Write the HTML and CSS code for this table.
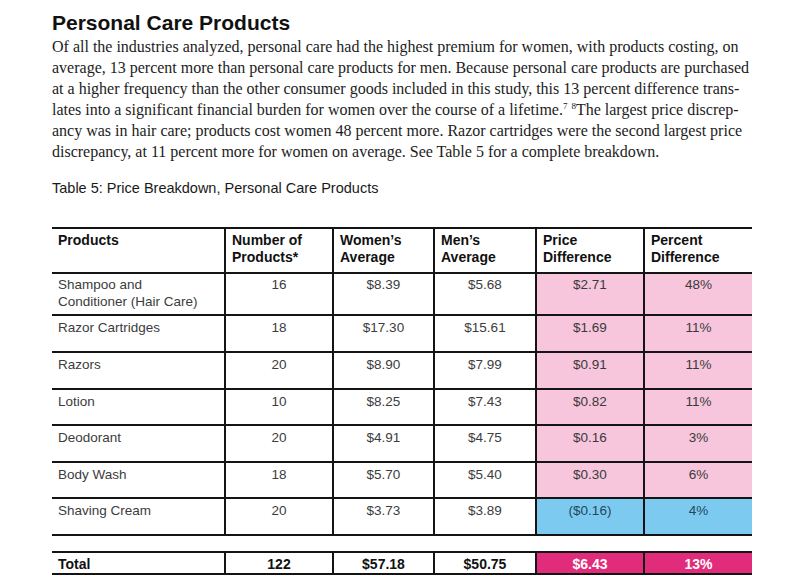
FILE: index.html
```html
<!DOCTYPE html>
<html lang="en">
<head>
<meta charset="utf-8">
<title>Personal Care Products</title>
<link rel="stylesheet" href="styles.css">
</head>
<body>
<main class="page">
  <h1 class="title">Personal Care Products</h1>
  <p class="body-text">
    <span class="line">Of all the industries analyzed, personal care had the highest premium for women, with products costing, on</span>
    <span class="line">average, 13 percent more than personal care products for men. Because personal care products are purchased</span>
    <span class="line">at a higher frequency than the other consumer goods included in this study, this 13 percent difference trans-</span>
    <span class="line">lates into a significant financial burden for women over the course of a lifetime.<sup>7</sup> <sup>8</sup>The largest price discrep-</span>
    <span class="line">ancy was in hair care; products cost women 48 percent more. Razor cartridges were the second largest price</span>
    <span class="line">discrepancy, at 11 percent more for women on average. See Table 5 for a complete breakdown.</span>
  </p>
  <h2 class="caption">Table 5: Price Breakdown, Personal Care Products</h2>

  <table class="price-table">
    <colgroup>
      <col class="c-product"><col class="c-num"><col class="c-w"><col class="c-m"><col class="c-pd"><col class="c-pc">
    </colgroup>
    <thead>
      <tr>
        <th>Products</th>
        <th>Number of<br>Products*</th>
        <th>Women’s<br>Average</th>
        <th>Men’s<br>Average</th>
        <th>Price<br>Difference</th>
        <th>Percent<br>Difference</th>
      </tr>
    </thead>
    <tbody>
      <tr class="first">
        <td class="name">Shampoo and<br>Conditioner (Hair Care)</td>
        <td>16</td><td>$8.39</td><td>$5.68</td><td class="pink">$2.71</td><td class="pink">48%</td>
      </tr>
      <tr>
        <td class="name">Razor Cartridges</td>
        <td>18</td><td>$17.30</td><td>$15.61</td><td class="pink">$1.69</td><td class="pink">11%</td>
      </tr>
      <tr>
        <td class="name">Razors</td>
        <td>20</td><td>$8.90</td><td>$7.99</td><td class="pink">$0.91</td><td class="pink">11%</td>
      </tr>
      <tr>
        <td class="name">Lotion</td>
        <td>10</td><td>$8.25</td><td>$7.43</td><td class="pink">$0.82</td><td class="pink">11%</td>
      </tr>
      <tr>
        <td class="name">Deodorant</td>
        <td>20</td><td>$4.91</td><td>$4.75</td><td class="pink">$0.16</td><td class="pink">3%</td>
      </tr>
      <tr>
        <td class="name">Body Wash</td>
        <td>18</td><td>$5.70</td><td>$5.40</td><td class="pink">$0.30</td><td class="pink">6%</td>
      </tr>
      <tr>
        <td class="name">Shaving Cream</td>
        <td>20</td><td>$3.73</td><td>$3.89</td><td class="blue">($0.16)</td><td class="blue">4%</td>
      </tr>
    </tbody>
  </table>

  <table class="price-table total-table">
    <colgroup>
      <col class="c-product"><col class="c-num"><col class="c-w"><col class="c-m"><col class="c-pd"><col class="c-pc">
    </colgroup>
    <tbody>
      <tr>
        <td class="name">Total</td>
        <td>122</td><td>$57.18</td><td>$50.75</td><td class="magenta">$6.43</td><td class="magenta">13%</td>
      </tr>
    </tbody>
  </table>
</main>
</body>
</html>
```

FILE: styles.css
```css
html, body {
  margin: 0;
  padding: 0;
  background: #ffffff;
}

.page {
  padding: 11px 0 0 52px;
  width: 700px;
}

.title {
  margin: 0;
  font-family: "Liberation Sans", Arial, sans-serif;
  font-weight: bold;
  font-size: 21px;
  line-height: 24px;
  color: #111111;
}

.body-text {
  margin: 1px 0 0 0;
  font-family: "Liberation Serif", "Times New Roman", serif;
  font-size: 16px;
  line-height: 21px;
  color: #1c1c1c;
}

.body-text .line {
  display: block;
  white-space: nowrap;
}

.body-text sup {
  font-size: 9px;
  line-height: 0;
  vertical-align: 6px;
}

.caption {
  margin: 17px 0 0 0;
  font-family: "Liberation Sans", Arial, sans-serif;
  font-weight: normal;
  font-size: 14.5px;
  line-height: 18px;
  color: #1a1a1a;
}

.price-table {
  margin-top: 30px;
  width: 700px;
  table-layout: fixed;
  border-collapse: collapse;
  font-family: "Liberation Sans", Arial, sans-serif;
}

.c-product { width: 173px; }
.c-num { width: 108px; }
.c-w { width: 101px; }
.c-m { width: 102px; }
.c-pd { width: 108px; }
.c-pc { width: 108px; }

.price-table th,
.price-table td {
  border: 2px solid #141414;
  padding: 0 6px;
  vertical-align: top;
}

.price-table th:first-child,
.price-table td:first-child {
  border-left: none;
}

.price-table th:last-child,
.price-table td:last-child {
  border-right: none;
}

.price-table th {
  text-align: left;
  font-weight: bold;
  font-size: 14px;
  line-height: 16.7px;
  color: #111111;
  padding-top: 3px;
  padding-bottom: 7px;
}

.price-table td {
  text-align: center;
  font-size: 13.5px;
  line-height: 16.7px;
  color: #3c3c3c;
  height: 36.6px;
  box-sizing: border-box;
  padding-top: 4px;
}

.price-table tr.first td {
  height: 42px;
  padding-top: 3px;
}

.price-table td.name {
  text-align: left;
}

.price-table td.pink {
  background: #f7c6dd;
  color: #3a3a3a;
}

.price-table td.blue {
  background: #7dcaf0;
  color: #22475c;
}

.total-table {
  margin-top: 15px;
}

.total-table td {
  height: 22px;
  padding-top: 3px;
  font-weight: bold;
  font-size: 14px;
  color: #111111;
}

.total-table td.magenta {
  background: #e12c7c;
  color: #ffffff;
}
```
